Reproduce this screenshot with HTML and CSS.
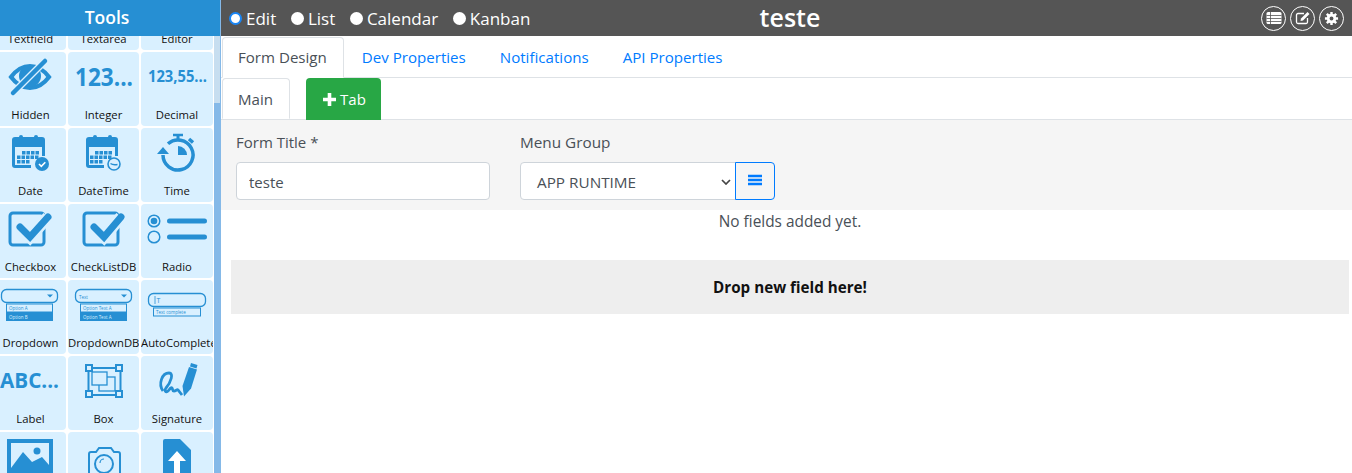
FILE: index.html
```html
<!DOCTYPE html>
<html lang="en">
<head>
  <meta charset="UTF-8" />
  <title>Form Builder</title>
  <link rel="stylesheet" href="styles.css">
</head>
<body>
  <aside class="sidebar">
    <div class="sidebar-title">Tools</div>
    <div class="sidebar-body">
      <div class="tool-grid">
        <div class="tool"><div class="tool-icon"></div><span>Textfield</span></div>
        <div class="tool"><div class="tool-icon"></div><span>Textarea</span></div>
        <div class="tool"><div class="tool-icon"></div><span>Editor</span></div>

        <div class="tool">
          <svg class="tool-icon" viewBox="0 0 72 50">
            <path d="M16 25C22 17 28 14 35 14s13 3 19 11c-6 8-12 11-19 11s-13-3-19-11z" fill="none" stroke="#268fd3" stroke-width="4.200"/>
            <circle cx="35" cy="24" r="11" fill="#268fd3"/>
            <path d="M50 9L18 41" stroke="#d9f0ff" stroke-width="7"/>
            <path d="M50 9L18 41" stroke="#268fd3" stroke-width="4.500" stroke-linecap="round"/>
          </svg>
          <span>Hidden</span>
        </div>
        <div class="tool">
          <svg class="tool-icon" viewBox="0 0 72 50">
            <text class="icon-text" x="7" y="34" font-size="25" textLength="58" lengthAdjust="spacingAndGlyphs">123...</text>
          </svg>
          <span>Integer</span>
        </div>
        <div class="tool">
          <svg class="tool-icon" viewBox="0 0 72 50">
            <text class="icon-text" x="7" y="30" font-size="15.5" textLength="59" lengthAdjust="spacingAndGlyphs">123,55...</text>
          </svg>
          <span>Decimal</span>
        </div>

        <div class="tool">
          <svg class="tool-icon" viewBox="0 0 72 50">
            <path d="M20 9h27a3 3 0 0 1 3 3v16h-3V19H20v18h16v3H20a3 3 0 0 1-3-3V12a3 3 0 0 1 3-3z" fill="#268fd3"/>
            <rect x="24" y="7" width="4" height="5" rx="2" fill="#268fd3"/>
            <rect x="39" y="7" width="4" height="5" rx="2" fill="#268fd3"/>
            <path d="M27 23h3.500v3.500H27zm4.500 0H35v3.500h-3.500zm4.500 0h3.500v3.500H36zm4.500 0H44v3.500h-3.500zM22 27.500h3.500V31H22zm4.500 0H30V31h-3.500zm4.500 0h3.500V31H31zm4.500 0H39V31h-3.500zm4.500 0h3.500V31H40zM22 32h3.500v3.500H22zm4.500 0H30v3.500h-3.500zm4.500 0h3.500v3.500H31z" fill="#268fd3"/>
            <circle cx="47" cy="36" r="7" fill="#268fd3"/>
            <path d="M44 36l2.300 2.300 4-4" fill="none" stroke="#fff" stroke-width="1.600"/>
          </svg>
          <span>Date</span>
        </div>
        <div class="tool">
          <svg class="tool-icon" viewBox="0 0 72 50">
            <path d="M21 9h26a3 3 0 0 1 3 3v16h-3V19H21v18h15v3H21a3 3 0 0 1-3-3V12a3 3 0 0 1 3-3z" fill="#268fd3"/>
            <rect x="25" y="7" width="4" height="5" rx="2" fill="#268fd3"/>
            <rect x="40" y="7" width="4" height="5" rx="2" fill="#268fd3"/>
            <path d="M27 23h3.500v3.500H27zm4.500 0H35v3.500h-3.500zm4.500 0h3.500v3.500H36zm4.500 0H44v3.500h-3.500zM22 27.500h3.500V31H22zm4.500 0H30V31h-3.500zm4.500 0h3.500V31H31zm4.500 0H39V31h-3.500zm4.500 0h3.500V31H40zM22 32h3.500v3.500H22zm4.500 0H30v3.500h-3.500zm4.500 0h3.500v3.500H31z" fill="#268fd3"/>
            <circle cx="46" cy="36" r="6" fill="#d9f0ff" stroke="#268fd3" stroke-width="1.600"/>
            <path d="M42.500 35.500c2 1.500 4 1.500 7 1" fill="none" stroke="#268fd3" stroke-width="1.300"/>
          </svg>
          <span>DateTime</span>
        </div>
        <div class="tool">
          <svg class="tool-icon" viewBox="0 0 72 50">
            <path d="M27 15.800A15 15 0 1 1 22 27" fill="none" stroke="#268fd3" stroke-width="3.500"/>
            <path d="M37 7v5" stroke="#268fd3" stroke-width="3"/>
            <path d="M32 7h10" stroke="#268fd3" stroke-width="2.500"/>
            <path d="M48 11l4 3.500" stroke="#268fd3" stroke-width="3.500"/>
            <path d="M37 18a9 9 0 0 1 9 9h-9z" fill="#268fd3"/>
            <path d="M22 19l6 7H16z" fill="#268fd3"/>
          </svg>
          <span>Time</span>
        </div>

        <div class="tool">
          <svg class="tool-icon" viewBox="0 0 72 50">
            <rect x="15" y="9" width="34" height="32" rx="3" fill="none" stroke="#268fd3" stroke-width="3"/>
            <path d="M25 23l10 10 18-20" fill="none" stroke="#d9f0ff" stroke-width="12"/>
            <path d="M25 23l10 10 18-20" fill="none" stroke="#268fd3" stroke-width="7" stroke-linecap="round"/>
          </svg>
          <span>Checkbox</span>
        </div>
        <div class="tool">
          <svg class="tool-icon" viewBox="0 0 72 50">
            <rect x="16" y="9" width="34" height="32" rx="3" fill="none" stroke="#268fd3" stroke-width="3"/>
            <path d="M26 23l10 10 17-20" fill="none" stroke="#d9f0ff" stroke-width="12"/>
            <path d="M26 23l10 10 17-20" fill="none" stroke="#268fd3" stroke-width="7" stroke-linecap="round"/>
          </svg>
          <span>CheckListDB</span>
        </div>
        <div class="tool">
          <svg class="tool-icon" viewBox="0 0 72 50">
            <circle cx="13" cy="17" r="5.800" fill="none" stroke="#268fd3" stroke-width="1.500"/>
            <circle cx="13" cy="17" r="3.300" fill="#268fd3"/>
            <circle cx="13" cy="33" r="5.800" fill="none" stroke="#268fd3" stroke-width="1.500"/>
            <path d="M28.500 17h35M28.500 33h35" stroke="#268fd3" stroke-width="5" stroke-linecap="round"/>
          </svg>
          <span>Radio</span>
        </div>

        <div class="tool">
          <svg class="tool-icon" viewBox="0 0 72 50">
            <rect x="6.500" y="9.500" width="56" height="13" rx="5" fill="none" stroke="#268fd3" stroke-width="1.300"/>
            <path d="M52 14.500h6l-3 3z" fill="#268fd3"/>
            <rect x="11.500" y="24" width="46" height="8" fill="none" stroke="#268fd3"/>
            <rect x="11" y="32" width="47" height="9" fill="#268fd3"/>
            <text class="icon-tiny" x="14" y="30">Option A</text>
            <text class="icon-tiny icon-tiny-on" x="14" y="38.500">Option B</text>
          </svg>
          <span>Dropdown</span>
        </div>
        <div class="tool">
          <svg class="tool-icon" viewBox="0 0 72 50">
            <rect x="7.500" y="9.500" width="56" height="13" rx="5" fill="none" stroke="#268fd3" stroke-width="1.300"/>
            <path d="M53 14.500h6l-3 3z" fill="#268fd3"/>
            <text class="icon-tiny" x="11" y="18.500" font-size="6.500">Text</text>
            <rect x="12.500" y="24" width="46" height="8" fill="none" stroke="#268fd3"/>
            <rect x="12" y="32" width="47" height="9" fill="#268fd3"/>
            <text class="icon-tiny" x="15" y="30">Option Text A</text>
            <text class="icon-tiny icon-tiny-on" x="15" y="38.500">Option Text A</text>
          </svg>
          <span>DropdownDB</span>
        </div>
        <div class="tool">
          <svg class="tool-icon" viewBox="0 0 72 50">
            <rect x="7.500" y="13.500" width="57" height="13" rx="5" fill="none" stroke="#268fd3" stroke-width="1.300"/>
            <path d="M14 16v8" stroke="#268fd3" stroke-width="0.800"/>
            <text class="icon-tiny icon-tiny-big" x="15.500" y="23">T</text>
            <rect x="12.500" y="28" width="47" height="8" fill="none" stroke="#268fd3"/>
            <text class="icon-tiny" x="15" y="34">Text complete</text>
          </svg>
          <span>AutoComplete</span>
        </div>

        <div class="tool">
          <svg class="tool-icon" viewBox="0 0 72 50">
            <text class="icon-text" x="5" y="32" font-size="22" textLength="59" lengthAdjust="spacingAndGlyphs">ABC...</text>
          </svg>
          <span>Label</span>
        </div>
        <div class="tool">
          <svg class="tool-icon" viewBox="0 0 72 50">
            <rect x="20.500" y="12" width="32" height="27" fill="none" stroke="#268fd3" stroke-width="2"/>
            <path d="M18 9h6v6h-6zm30 0h6v6h-6zM18 35h6v6h-6zm30 0h6v6h-6z" fill="#d9f0ff" stroke="#268fd3" stroke-width="2"/>
            <rect x="31" y="21" width="16" height="14" fill="none" stroke="#268fd3" stroke-width="1.300"/>
            <rect x="24" y="16" width="15" height="13" fill="#d9f0ff" stroke="#268fd3" stroke-width="1.300"/>
          </svg>
          <span>Box</span>
        </div>
        <div class="tool">
          <svg class="tool-icon" viewBox="0 0 72 50">
            <path d="M22 35C17 28 21 17 28 17c5 0 2 9-3 15-2 3 0 5 2 3 2-2 3-4 4-3 1 1 0 3 2 3 2 0 3-2 4-1l4 5" fill="none" stroke="#268fd3" stroke-width="2.800"/>
            <path d="M48 11l8 2.500-6 19-7 8-1.500-10.500z" fill="#268fd3"/>
            <path d="M50 7l6.500 2-1 3.500-6.500-2z" fill="#268fd3"/>
          </svg>
          <span>Signature</span>
        </div>

        <div class="tool">
          <svg class="tool-icon" viewBox="0 0 72 50">
            <rect x="14" y="9" width="42" height="42" fill="none" stroke="#268fd3" stroke-width="4"/>
            <path d="M16 49V36l12-16 9 10 10-5 7 8v16z" fill="#268fd3"/>
            <circle cx="42" cy="19" r="3.500" fill="#268fd3"/>
          </svg>
        </div>
        <div class="tool">
          <svg class="tool-icon" viewBox="0 0 72 50">
            <path d="M23 20h5l3-4h12l3 4h4a2 2 0 0 1 2 2v24a2 2 0 0 1-2 2H23a2 2 0 0 1-2-2V22a2 2 0 0 1 2-2z" fill="none" stroke="#268fd3" stroke-width="2"/>
            <circle cx="36" cy="32" r="9" fill="none" stroke="#268fd3" stroke-width="2"/>
            <path d="M32 31a4 4 0 0 1 4-4" fill="none" stroke="#268fd3" stroke-width="1.200"/>
          </svg>
        </div>
        <div class="tool">
          <svg class="tool-icon" viewBox="0 0 72 50">
            <path d="M24 7h15l11 11v32H22V9a2 2 0 0 1 2-2z" fill="#268fd3"/>
            <path d="M36 19l-9 10h6v14h6V29h6z" fill="#fff"/>
          </svg>
        </div>
      </div>
      <div class="scroll-track"><div class="scroll-thumb"></div></div>
    </div>
  </aside>

  <main class="main">
    <header class="topbar">
      <div class="view-modes">
        <label class="view-mode"><i class="dot dot-on"></i>Edit</label>
        <label class="view-mode"><i class="dot"></i>List</label>
        <label class="view-mode"><i class="dot"></i>Calendar</label>
        <label class="view-mode"><i class="dot"></i>Kanban</label>
      </div>
      <div class="form-name">teste</div>
      <div class="top-actions">
        <span class="round-btn">
          <svg viewBox="0 0 16 16" width="16" height="16"><rect x="0.500" y="2" width="15" height="12" rx="1.500" fill="#fff"/><path d="M0.500 5.500h15M0.500 8.500h15M0.500 11.500h15" stroke="#555" stroke-width="0.800"/><path d="M4.500 2v12" stroke="#555" stroke-width="0.800"/></svg>
        </span>
        <span class="round-btn">
          <svg viewBox="0 0 16 16" width="16" height="16"><path d="M9 3.500H3A1.500 1.500 0 0 0 1.500 5v7A1.500 1.500 0 0 0 3 13.500h8a1.500 1.500 0 0 0 1.500-1.500V8" fill="none" stroke="#fff" stroke-width="1.300"/><path d="M6 8.500l6.500-6.500 2 2L8 10.500l-2.500.500z" fill="#fff"/></svg>
        </span>
        <span class="round-btn">
          <svg viewBox="0 0 16 16" width="15" height="15"><circle cx="8" cy="8" r="3.600" fill="none" stroke="#fff" stroke-width="3"/><path d="M8 1v3M8 12v3M1 8h3M12 8h3M3 3l2.200 2.200M10.800 10.800L13 13M13 3l-2.200 2.200M5.200 10.800L3 13" stroke="#fff" stroke-width="2.600"/></svg>
        </span>
      </div>
    </header>

    <nav class="tabs">
      <a class="tab tab-active">Form Design</a>
      <a class="tab">Dev Properties</a>
      <a class="tab">Notifications</a>
      <a class="tab">API Properties</a>
    </nav>

    <nav class="tabs subtabs">
      <a class="tab tab-active">Main</a>
      <a class="add-tab">
        <svg viewBox="0 0 13 13" width="13" height="13"><path d="M6.500 0v13M0 6.500h13" stroke="#fff" stroke-width="3.600"/></svg>
        Tab
      </a>
    </nav>

    <section class="form-head">
      <div class="field field-title">
        <label>Form Title *</label>
        <input class="control" type="text" value="teste">
      </div>
      <div class="field field-group">
        <label>Menu Group</label>
        <div class="input-group">
          <div class="control select-box">
            <span>APP RUNTIME</span>
            <svg viewBox="0 0 10 6" width="10" height="6"><path d="M1 1l4 4 4-4" fill="none" stroke="#444" stroke-width="1.700"/></svg>
          </div>
          <button class="list-btn">
            <svg viewBox="0 0 14 12" width="14" height="12"><path d="M0 2h14M0 6h14M0 10h14" stroke="#007bff" stroke-width="2.400"/></svg>
          </button>
        </div>
      </div>
    </section>

    <div class="canvas">
      <p class="empty-note">No fields added yet.</p>
      <div class="drop-zone">Drop new field here!</div>
    </div>
  </main>
</body>
</html>
```

FILE: styles.css
```css
* {
  box-sizing: border-box;
}

body {
  margin: 0;
  display: flex;
  height: 473px;
  overflow: hidden;
  font-family: 'Open Sans', sans-serif;
  font-size: 15px;
  color: #495057;
  background: #fff;
}

/* left tool list */
.sidebar {
  width: 221px;
  flex-shrink: 0;
  display: flex;
  flex-direction: column;
  overflow: hidden;
  border-right: 1px solid #85b9e8;
}

.sidebar-title {
  height: 36px;
  flex-shrink: 0;
  padding-right: 6px;
  line-height: 35px;
  text-align: center;
  font-size: 17.500px;
  font-weight: 600;
  color: #fff;
  background: #268fd3;
  position: relative;
  z-index: 1;
}

.sidebar-body {
  flex: 1;
  display: flex;
  min-height: 0;
}

.tool-grid {
  width: 219px;
  flex-shrink: 0;
  display: grid;
  grid-template-columns: 71px 71px 72px;
  grid-auto-rows: 74px;
  gap: 2px;
  margin: -60px 0 0 -5px;
  align-content: start;
}

.tool {
  background: #d9f0ff;
  border-radius: 4px;
  overflow: hidden;
  color: #111;
  font-size: 11.300px;
  text-align: center;
  white-space: nowrap;
}

.tool-icon {
  display: block;
  width: 72px;
  height: 50px;
  margin-bottom: 5px;
}

.tool span {
  display: block;
  line-height: 16px;
}

.icon-text {
  font-family: 'Open Sans', sans-serif;
  font-weight: 700;
  fill: #268fd3;
}

.icon-tiny {
  font-family: 'Open Sans', sans-serif;
  font-size: 4.500px;
  fill: #268fd3;
}

.icon-tiny-on {
  fill: #d9f0ff;
}

.icon-tiny-big {
  font-size: 7px;
}

.scroll-track {
  flex: 1;
  background: #c7def0;
}

.scroll-thumb {
  height: 370px;
  margin-top: 67px;
  background: #85b9e8;
}

/* main area */
.main {
  flex: 1;
  min-width: 0;
}

.topbar {
  height: 36px;
  display: flex;
  align-items: center;
  position: relative;
  padding: 0 8px;
  color: #fff;
  background: #555;
}

.view-modes {
  display: flex;
  gap: 14.700px;
  font-size: 17px;
}

.view-mode {
  display: flex;
  align-items: center;
  gap: 4px;
}

.dot {
  width: 13px;
  height: 13px;
  border-radius: 50%;
  background: #fff;
}

.dot-on {
  border: 2.500px solid #1a86f5;
}

.form-name {
  position: absolute;
  left: 0;
  right: -7px;
  top: 0;
  line-height: 34px;
  text-align: center;
  font-size: 25px;
  font-weight: 600;
}

.top-actions {
  margin-left: auto;
  display: flex;
  gap: 4px;
}

.round-btn {
  width: 25px;
  height: 25px;
  display: flex;
  align-items: center;
  justify-content: center;
  border: 1.500px solid #fff;
  border-radius: 50%;
}

.tabs {
  height: 42px;
  display: flex;
  padding: 1px 0 0 1px;
  border-bottom: 1px solid #dee2e6;
}

.tab {
  padding: 0 16px;
  line-height: 38px;
  font-size: 15.100px;
  color: #007bff;
  border: 1px solid transparent;
  border-radius: 4px 4px 0 0;
}

.tabs .tab-active {
  height: 41px;
  padding: 0 16px 0 15px;
  color: #495057;
  background: #fff;
  border-color: #dee2e6 #dee2e6 #fff;
}

.tab-active + .tab {
  margin-left: 1px;
}

.subtabs {
  padding-top: 0;
}

.subtabs .tab {
  line-height: 40px;
}

.add-tab {
  display: flex;
  align-items: center;
  gap: 4px;
  height: 42px;
  margin-left: 16px;
  padding: 0 15px 0 17px;
  color: #fff;
  background: #28a745;
  border-radius: 4px 4px 0 0;
}

.form-head {
  height: 90px;
  display: flex;
  padding: 12px 15px 0;
  background: #f5f5f5;
}

.field label {
  display: block;
  height: 30px;
  line-height: 20px;
}

.field-group label {
  font-size: 15.300px;
}

.field-title {
  width: 254px;
  margin-right: 30px;
}

.control {
  height: 38px;
  width: 100%;
  padding: 1px 12px 0;
  font: inherit;
  color: #495057;
  background: #fff;
  border: 1px solid #ced4da;
  border-radius: 4px;
}

.input-group {
  display: flex;
}

.select-box {
  width: 216px;
  display: flex;
  align-items: center;
  justify-content: space-between;
  padding: 1px 4px 0 16px;
  font-size: 15.300px;
  border-radius: 4px 0 0 4px;
}

.list-btn {
  width: 40px;
  height: 38px;
  margin-left: -1px;
  padding: 0;
  background: transparent;
  border: 1px solid #007bff;
  border-radius: 0 4px 4px 0;
}

.canvas {
  padding: 0 3px 0 10px;
}

.empty-note {
  margin: 0;
  height: 50px;
  line-height: 24px;
  font-size: 15.400px;
  text-align: center;
}

.drop-zone {
  height: 54px;
  line-height: 54px;
  text-align: center;
  font-size: 15.200px;
  font-weight: 700;
  color: #111;
  background: #eee;
}
```
